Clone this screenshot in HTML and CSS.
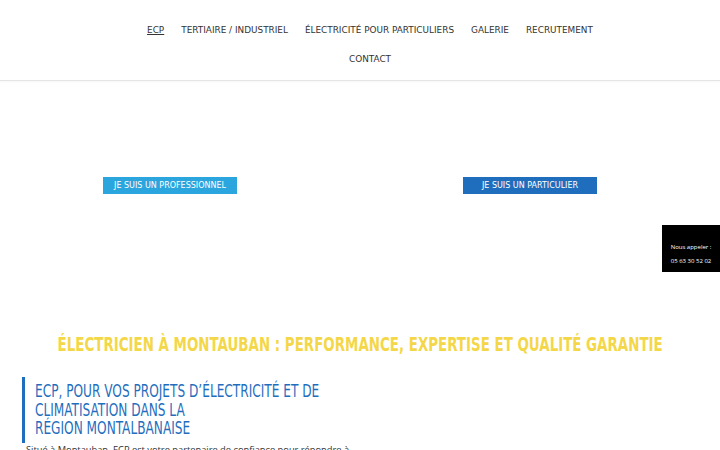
FILE: index.html
```html
<!DOCTYPE html>
<html lang="fr">
<head>
<meta charset="utf-8">
<title>ECP - Électricien à Montauban</title>
<link rel="stylesheet" href="styles.css">
</head>
<body>
<header class="site-header">
  <nav class="main-nav">
    <a class="nav-link active" href="#">ECP</a>
    <a class="nav-link" href="#">TERTIAIRE / INDUSTRIEL</a>
    <a class="nav-link" href="#">ÉLECTRICITÉ POUR PARTICULIERS</a>
    <a class="nav-link" href="#">GALERIE</a>
    <a class="nav-link" href="#">RECRUTEMENT</a>
    <a class="nav-link" href="#">CONTACT</a>
  </nav>
</header>

<section class="hero">
  <div class="hero-col"><a class="btn btn-pro" href="#">JE SUIS UN PROFESSIONNEL</a></div>
  <div class="hero-col"><a class="btn btn-part" href="#">JE SUIS UN PARTICULIER</a></div>
</section>

<aside class="call-box">
  <p>Nous appeler :</p>
  <p>05 63 30 52 02</p>
</aside>

<main class="content">
  <h1 class="main-title"><span class="cond">ÉLECTRICIEN À MONTAUBAN : PERFORMANCE, EXPERTISE ET QUALITÉ GARANTIE</span></h1>
  <div class="intro">
    <h2 class="intro-title"><span class="cond-left">ECP, POUR VOS PROJETS D’ÉLECTRICITÉ ET DE<br>CLIMATISATION DANS LA<br>RÉGION MONTALBANAISE</span></h2>
    <p class="intro-text">Situé à Montauban, ECP est votre partenaire de confiance pour répondre à vos besoins en électricité et en climatisation.</p>
  </div>
</main>
</body>
</html>
```
FILE: styles.css
```css
* { box-sizing: border-box; }
html, body { margin: 0; padding: 0; }
body {
  background: #fff;
  font-family: "Open Sans", "Liberation Sans", sans-serif;
  color: #333;
  overflow: hidden;
}
.site-header {
  height: 81px;
  border-bottom: 1px solid #e4e4e4;
  box-shadow: 0 1px 2px rgba(0,0,0,0.04);
  display: flex;
  justify-content: center;
  align-items: flex-start;
  padding-top: 23px;
  padding-left: 20px;
}
.main-nav {
  width: 470px;
  display: flex;
  flex-wrap: wrap;
  justify-content: center;
  align-content: flex-start;
  column-gap: 17px;
  row-gap: 14px;
}
.nav-link {
  font-family: "DejaVu Sans", sans-serif;
  font-size: 8.9px;
  line-height: 15px;
  color: #333;
  text-decoration: none;
}
.nav-link.active { text-decoration: underline; }

.hero {
  height: 220px;
  display: grid;
  grid-template-columns: 1fr 1fr;
  align-items: start;
  padding-top: 96px;
}
.hero-col { display: flex; justify-content: center; }
.btn {
  display: block;
  width: 134px;
  height: 17px;
  line-height: 18px;
  margin-right: 20px;
  text-align: center;
  color: #fff;
  text-decoration: none;
  font-family: "DejaVu Sans", sans-serif;
  font-size: 8px;
}
.btn-pro { background: #2aa5de; }
.btn-part { background: #1f6ebd; }

.call-box {
  position: fixed;
  right: 0;
  top: 225px;
  width: 58px;
  height: 47px;
  background: #000;
  color: #fff;
  font-family: "Open Sans", sans-serif;
  font-size: 6px;
  line-height: 8px;
  text-align: center;
  display: flex;
  flex-direction: column;
  padding-top: 18px;
  gap: 6px;
}
.call-box p { margin: 0; }

.content { padding: 30px 22px 0; }
.main-title {
  margin: 0;
  display: flex;
  justify-content: center;
  white-space: nowrap;
  font-family: "DejaVu Sans", sans-serif;
  font-stretch: condensed;
  font-weight: bold;
  font-size: 20px;
  line-height: 26px;
  color: #f4d748;
}
.cond {
  display: inline-block;
  flex-shrink: 0;
  transform: scaleX(0.745);
  transform-origin: center;
}
.intro { margin-top: 20px; }
.intro-title {
  margin: 0;
  border-left: 3px solid #1f6ebd;
  padding: 5px 0 5px 10px;
  white-space: nowrap;
  font-family: "DejaVu Sans", sans-serif;
  font-stretch: condensed;
  font-weight: normal;
  font-size: 18px;
  line-height: 18.5px;
  color: #1f6ebd;
}
.cond-left {
  display: inline-block;
  transform: scaleX(0.75);
  transform-origin: left center;
}
.intro-text {
  margin: 0 0 0 4px;
  font-size: 9.3px;
  line-height: 14px;
  width: 332px;
}
```
